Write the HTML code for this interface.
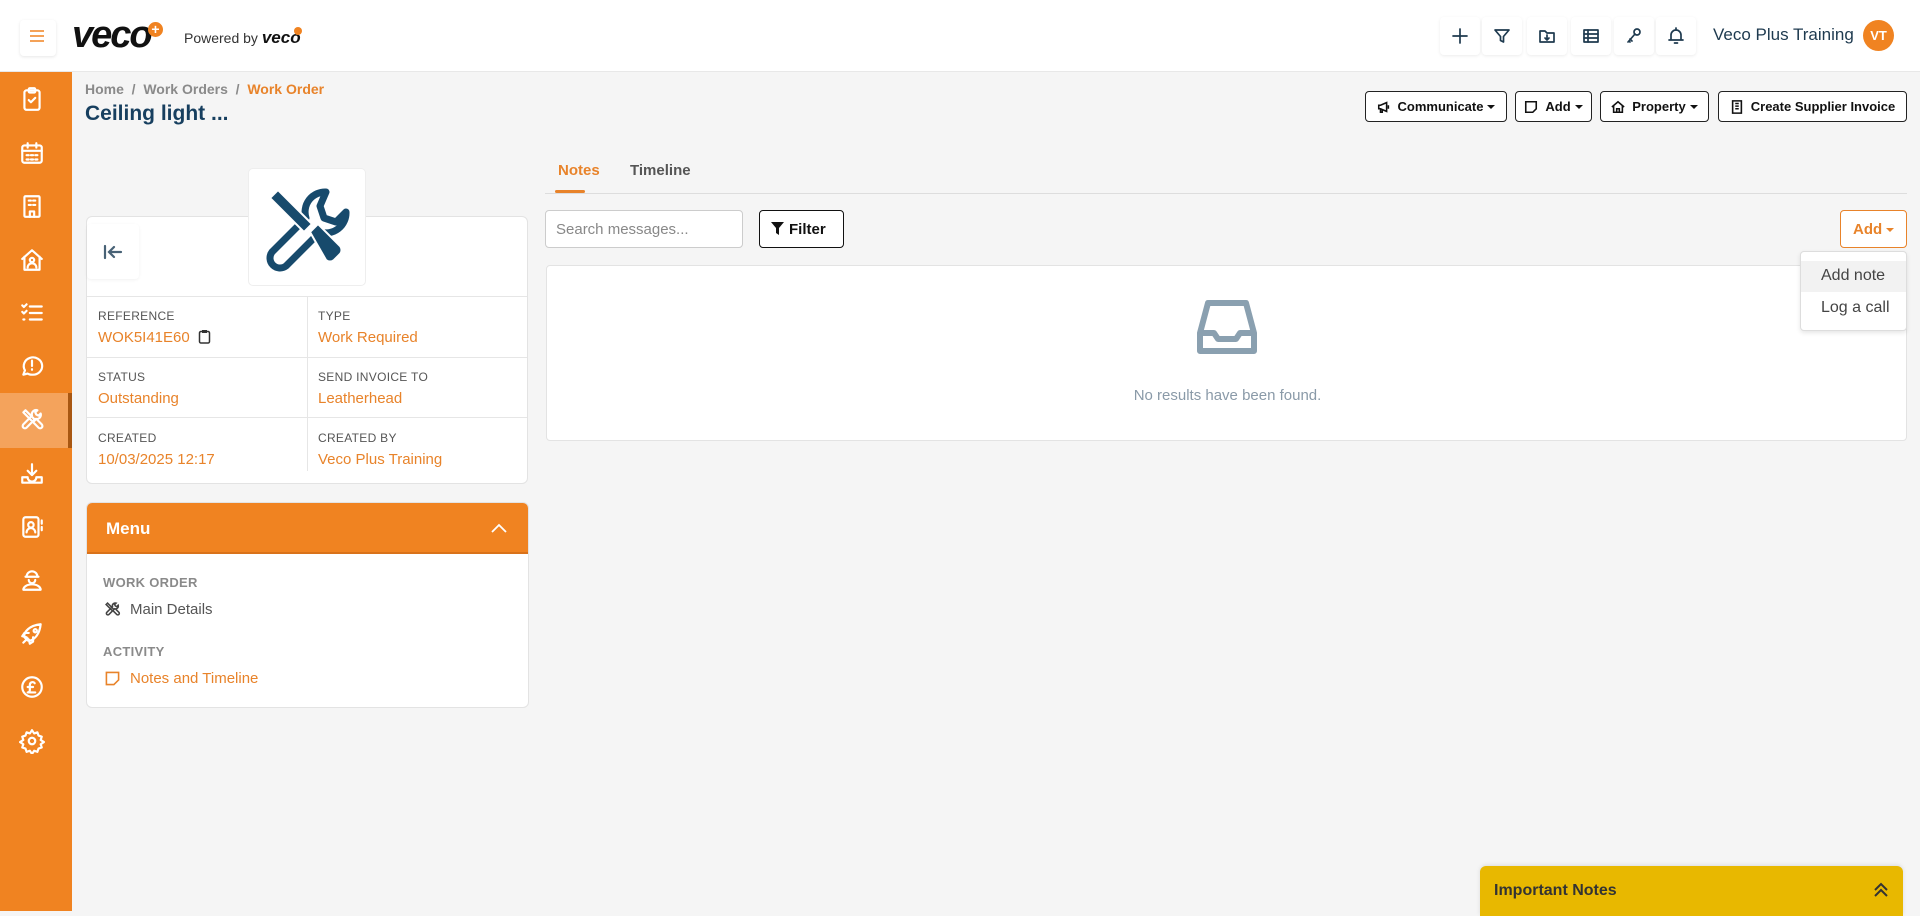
<!DOCTYPE html>
<html><head><meta charset="utf-8"><style>
*{box-sizing:border-box;margin:0;padding:0}
body{width:1920px;height:911px;overflow:hidden;background:#f5f5f5;font-family:"Liberation Sans",sans-serif;position:relative;color:#333}
.abs{position:absolute}
.hdr{left:0;top:0;width:1920px;height:72px;background:#fff;border-bottom:1px solid #e8e8e8}
.side{left:0;top:72px;width:72px;height:839px;background:#f08321}
.side svg{position:absolute;left:19px;width:26px;height:26px;fill:none;stroke:#fff;stroke-width:2;stroke-linecap:round;stroke-linejoin:round}
.hicon{position:absolute;top:17px;width:40px;height:38px;border-radius:4px;box-shadow:0 1px 3px rgba(0,0,0,.08);background:#fff}
.hicon svg{position:absolute;left:10px;top:9px;width:20px;height:20px;fill:none;stroke:#1e3a4f;stroke-width:1.7;stroke-linecap:round;stroke-linejoin:round}
.btn{position:absolute;top:91px;height:31px;border:1.5px solid #222;border-radius:4px;background:#fff;font-weight:bold;font-size:13px;color:#111;display:flex;align-items:center;justify-content:center;white-space:nowrap}
.btn svg{width:14px;height:14px;fill:none;stroke:#111;stroke-width:1.8;margin-right:7px}
.caret{display:inline-block;border-left:4px solid transparent;border-right:4px solid transparent;border-top:4px solid #111;margin-left:4px;vertical-align:middle}
.card{background:#fff;border:1px solid #e3e3e3;border-radius:6px}
.lbl{font-size:12px;color:#555;letter-spacing:.3px}
.val{font-size:15px;color:#e8832a;margin-top:6px}
</style></head><body>
<div class="abs hdr">
  <div class="abs" style="left:20px;top:20px;width:36px;height:36px;border-radius:4px;box-shadow:0 1px 3px rgba(0,0,0,.1)"></div>
  <svg class="abs" style="left:29px;top:28px" width="16" height="16" viewBox="0 0 16 16"><path d="M1 3h14M1 8h14M1 13h14" stroke="#f08321" stroke-width="1.6"/></svg>
  <div class="abs" style="left:72px;top:14px;font-size:38px;font-weight:bold;font-style:italic;color:#111;letter-spacing:-2px">veco</div>
  <div class="abs" style="left:148px;top:22px;width:15px;height:15px;border-radius:50%;background:#f08321;color:#fff;font-size:14px;line-height:15px;text-align:center;font-weight:bold">+</div>
  <div class="abs" style="left:184px;top:28px;font-size:14px;color:#333">Powered by <b style="font-style:italic;font-size:17px;color:#111">veco</b></div>
  <div class="abs" style="left:294px;top:27px;width:8px;height:8px;border-radius:50%;background:#f08321"></div>
  <div class="hicon" style="left:1440px"><svg viewBox="0 0 20 20"><path d="M10 3v14M3 10h14"/></svg></div>
  <div class="hicon" style="left:1482px"><svg viewBox="0 0 20 20"><path d="M3 4h14l-5.5 6.5V16l-3-1.5v-4z"/></svg></div>
  <div class="hicon" style="left:1527px"><svg viewBox="0 0 20 20"><path d="M3 5v11h14V7h-7L8 5z M10 9v5M8 12l2 2 2-2"/></svg></div>
  <div class="hicon" style="left:1571px"><svg viewBox="0 0 20 20"><rect x="3" y="4" width="14" height="12"/><path d="M3 8h14M3 12h14M7 4v12"/></svg></div>
  <div class="hicon" style="left:1614px"><svg viewBox="0 0 20 20"><circle cx="13" cy="6" r="3"/><path d="M11 8l-7 8M6 13l2 2M5 15l1 1"/></svg></div>
  <div class="hicon" style="left:1656px"><svg viewBox="0 0 20 20"><path d="M5 14V9a5 5 0 0110 0v5H5zM3 14h14M8.5 17h3M10 2v2"/></svg></div>
  <div class="abs" style="left:1713px;top:25px;font-size:17px;color:#1e3a4f">Veco Plus Training</div>
  <div class="abs" style="left:1863px;top:20px;width:31px;height:31px;border-radius:50%;background:#f08321;color:#fff;font-size:13px;font-weight:bold;line-height:31px;text-align:center">VT</div>
</div>
<div class="abs side">
  <div class="abs" style="left:0;top:321px;width:68px;height:55px;background:#f4a35c"></div>
  <div class="abs" style="left:68px;top:321px;width:4px;height:55px;background:#a85712"></div>
  <svg style="top:14px" viewBox="0 0 24 24"><rect x="5" y="4" width="14" height="18" rx="2"/><rect x="9" y="2" width="6" height="4" rx="1"/><path d="M9 13l2 2 4-4"/></svg>
  <svg style="top:68px" viewBox="0 0 24 24"><rect x="3" y="5" width="18" height="16" rx="2"/><path d="M3 10h18M8 3v4M16 3v4M7 14h2M11 14h2M15 14h2M7 18h2M11 18h2M15 18h2"/></svg>
  <svg style="top:121px" viewBox="0 0 24 24"><rect x="5" y="3" width="14" height="19" rx="1"/><path d="M9 7h2M13 7h2M9 11h2M13 11h2M10 22v-5h4v5"/></svg>
  <svg style="top:175px" viewBox="0 0 24 24"><path d="M3 11l9-8 9 8M5 9v12h14V9"/><circle cx="12" cy="12" r="2"/><path d="M8 19a4 4 0 018 0"/></svg>
  <svg style="top:228px" viewBox="0 0 24 24"><path d="M3 5l1.5 1.5L7 4M3 11l1.5 1.5L7 10M10 6h11M10 12h11M10 18h11M4 18h1"/></svg>
  <svg style="top:281px" viewBox="0 0 24 24"><path d="M4 20l1.5-4A8.5 8 0 1112 20c-1.5 0-3-.3-4-1z"/><path d="M12 7v5M12 15v.5"/></svg>
  <svg style="top:335px" viewBox="0 0 24 24"><path d="M4 5l2-2 9 9-2 2zM13 14l5 5a2 2 0 003-3l-5-5M20 6a4 4 0 01-5 5L7 19a2 2 0 01-3-3l8-8a4 4 0 015-5l-2 2 1 2 2 1z"/></svg>
  <svg style="top:389px" viewBox="0 0 24 24"><path d="M12 3v10M8 9l4 4 4-4M3 15v5h18v-5h-5a4 4 0 01-8 0z"/></svg>
  <svg style="top:442px" viewBox="0 0 24 24"><rect x="4" y="3" width="14" height="18" rx="2"/><circle cx="11" cy="10" r="2.5"/><path d="M7 17a4 4 0 018 0M21 6v3M21 12v3"/></svg>
  <svg style="top:495px" viewBox="0 0 24 24"><path d="M7 9a5 5 0 0110 0zM6 9h12M9 12a3 3 0 006 0M4 21a8 5 0 0116 0z"/></svg>
  <svg style="top:549px" viewBox="0 0 24 24"><path d="M5 15c-1-5 5-11 15-12-1 10-7 16-12 15zM8 16l-4 4M9 11H5l-2 3 4 1M13 15v4l-3 2-1-4"/><circle cx="15" cy="9" r="1.5"/></svg>
  <svg style="top:602px" viewBox="0 0 24 24"><circle cx="12" cy="12" r="9"/><path d="M14.5 8.5a2.5 2.5 0 00-4.5 1.5v5c0 1-1 2-2 2h7M8 12h5"/></svg>
  <svg style="top:656px" viewBox="0 0 24 24"><circle cx="12" cy="12" r="3"/><path d="M12 2l2 3 3-1 1 3 3 1-1 3 3 2-3 2 1 3-3 1-1 3-3-1-2 3-2-3-3 1-1-3-3-1 1-3-3-2 3-2-1-3 3-1 1-3 3 1z"/></svg>
</div>

<div class="abs" style="left:85px;top:81px;font-size:14px;font-weight:bold;color:#8a8a8a">Home &nbsp;/&nbsp; Work Orders &nbsp;/&nbsp; <span style="color:#e8832a">Work Order</span></div>
<div class="abs" style="left:85px;top:102px;font-size:21px;font-weight:bold;color:#173f5f">Ceiling light ...</div>

<div class="btn" style="left:1365px;width:142px"><svg viewBox="0 0 16 16"><path d="M2 6v4h2l7 3V3L4 6zM4 10v4h2v-3.5M13 6v4"/></svg>Communicate<span class="caret"></span></div>
<div class="btn" style="left:1515px;width:77px"><svg viewBox="0 0 16 16"><path d="M2 2h12v8l-4 4H2z"/></svg>Add<span class="caret"></span></div>
<div class="btn" style="left:1600px;width:109px"><svg viewBox="0 0 16 16"><path d="M1 8l7-6 7 6M3 6v8h10V6M6.5 14v-4h3v4"/></svg>Property<span class="caret"></span></div>
<div class="btn" style="left:1718px;width:189px"><svg viewBox="0 0 16 16"><path d="M3 1h10v14H3zM6 4h4M6 7h4M6 10h4"/></svg>Create Supplier Invoice</div>

<div class="abs card" style="left:86px;top:216px;width:442px;height:268px">
  <div class="abs" style="left:0;top:7px;width:52px;height:55px;border-radius:4px;box-shadow:0 1px 3px rgba(0,0,0,.06)"></div>
  <svg class="abs" style="left:15px;top:26px" width="22" height="18" viewBox="0 0 22 18"><path d="M3 3v12M19 9H8M12 4L7 9l5 5" fill="none" stroke="#486276" stroke-width="2.2" stroke-linecap="round"/></svg>
  <div class="abs" style="left:0;top:79px;width:440px;border-top:1px solid #e6e6e6"></div>
  <div class="abs" style="left:0;top:140px;width:440px;border-top:1px solid #e6e6e6"></div>
  <div class="abs" style="left:0;top:200px;width:440px;border-top:1px solid #e6e6e6"></div>
  <div class="abs" style="left:220px;top:79px;height:175px;border-left:1px solid #e6e6e6"></div>
  <div class="abs" style="left:11px;top:92px"><div class="lbl">REFERENCE</div><div class="val">WOK5I41E60 <svg width="13" height="15" viewBox="0 0 13 15" style="vertical-align:-2px;margin-left:4px"><rect x="1.5" y="2.5" width="10" height="11.5" rx="1.5" fill="none" stroke="#333" stroke-width="1.5"/><rect x="4" y="1" width="5" height="3" fill="#333"/></svg></div></div>
  <div class="abs" style="left:231px;top:92px"><div class="lbl">TYPE</div><div class="val">Work Required</div></div>
  <div class="abs" style="left:11px;top:153px"><div class="lbl">STATUS</div><div class="val">Outstanding</div></div>
  <div class="abs" style="left:231px;top:153px"><div class="lbl">SEND INVOICE TO</div><div class="val">Leatherhead</div></div>
  <div class="abs" style="left:11px;top:214px"><div class="lbl">CREATED</div><div class="val">10/03/2025 12:17</div></div>
  <div class="abs" style="left:231px;top:214px"><div class="lbl">CREATED BY</div><div class="val">Veco Plus Training</div></div>
</div>
<div class="abs" style="left:248px;top:168px;width:118px;height:118px;background:#fff;border:1px solid #eee;border-radius:5px">
  <svg class="abs" style="left:15px;top:15px" width="88" height="88" viewBox="0 0 88 88">
    <path d="M62 8a20 20 0 00-20 26L8 68a10 10 0 0014 14l34-34a20 20 0 0026-20l-10 10-12-4-4-12z" fill="none" stroke="#174a6c" stroke-width="7" stroke-linejoin="round"/>
    <path d="M6 14l8-8 34 34-8 8z" fill="#174a6c" stroke="#fff" stroke-width="2"/>
    <path d="M46 48l8-8 22 22a6 6 0 010 8l-6 6a6 6 0 01-8 0z" fill="#174a6c" stroke="#fff" stroke-width="2"/>
  </svg>
</div>

<div class="abs card" style="left:86px;top:502px;width:443px;height:206px;overflow:hidden">
  <div class="abs" style="left:0;top:0;width:443px;height:51px;background:#f08321;border-bottom:2px solid #d9721a"></div>
  <div class="abs" style="left:19px;top:16px;font-size:17px;font-weight:bold;color:#fff">Menu</div>
  <svg class="abs" style="left:403px;top:19px" width="18" height="12" viewBox="0 0 18 12"><path d="M2 10l7-7 7 7" fill="none" stroke="#fff" stroke-width="1.8"/></svg>
  <div class="abs" style="left:16px;top:72px;font-size:13px;font-weight:bold;color:#8a8a8a;letter-spacing:.3px">WORK ORDER</div>
  <svg class="abs" style="left:17px;top:98px" width="17" height="17" viewBox="0 0 24 24"><path d="M3 5l2-2 9 9-2 2zM13 14l5 5a2 2 0 003-3l-5-5M20 6a4 4 0 01-5 5L7 19a2 2 0 01-3-3l8-8a4 4 0 015-5l-2 2 1 2 2 1z" fill="none" stroke="#444" stroke-width="2.2"/></svg>
  <div class="abs" style="left:43px;top:98px;font-size:15px;color:#555">Main Details</div>
  <div class="abs" style="left:16px;top:141px;font-size:13px;font-weight:bold;color:#8a8a8a;letter-spacing:.3px">ACTIVITY</div>
  <svg class="abs" style="left:18px;top:168px" width="15" height="15" viewBox="0 0 16 16"><path d="M1.5 1.5h13v8l-5 5h-8z" fill="none" stroke="#e8832a" stroke-width="1.7"/></svg>
  <div class="abs" style="left:43px;top:167px;font-size:15px;color:#e8832a">Notes and Timeline</div>
</div>

<div class="abs" style="left:558px;top:162px;font-size:15px;font-weight:bold;color:#e8832a">Notes</div>
<div class="abs" style="left:630px;top:162px;font-size:15px;font-weight:bold;color:#555">Timeline</div>
<div class="abs" style="left:545px;top:193px;width:1362px;border-top:1px solid #ddd"></div>
<div class="abs" style="left:555px;top:190px;width:30px;height:3px;background:#e8832a;border-radius:2px"></div>

<div class="abs" style="left:545px;top:210px;width:198px;height:38px;background:#fff;border:1px solid #ccc;border-radius:4px;font-size:15px;color:#888;padding:10px 0 0 10px">Search messages...</div>
<div class="abs" style="left:759px;top:210px;width:85px;height:38px;background:#fff;border:1.5px solid #111;border-radius:4px;font-size:15px;font-weight:bold;color:#111;padding:10px 0 0 11px"><svg width="13" height="13" viewBox="0 0 13 13" style="vertical-align:-1px;margin-right:5px"><path d="M0 0h13L8 6v7L5 11V6z" fill="#111"/></svg>Filter</div>
<div class="abs" style="left:1840px;top:210px;width:67px;height:38px;background:#fff;border:1px solid #e8832a;border-radius:4px;font-size:15px;font-weight:bold;color:#e8832a;padding:10px 0 0 12px">Add<span class="caret" style="border-top-color:#e8832a"></span></div>

<div class="abs card" style="left:546px;top:265px;width:1361px;height:176px;border-radius:4px">
  <svg class="abs" style="left:647px;top:33px" width="66" height="58" viewBox="0 0 66 58"><path d="M14 4h38l8 30v18H6V34z M6 34h14l4 6h18l4-6h14" fill="none" stroke="#8aa0b0" stroke-width="6" stroke-linejoin="round"/></svg>
  <div class="abs" style="left:0;width:1361px;top:121px;text-align:center;font-size:15px;color:#8a9aa8">No results have been found.</div>
</div>

<div class="abs" style="left:1800px;top:251px;width:107px;height:80px;background:#fff;border:1px solid #ddd;border-radius:4px;box-shadow:0 2px 5px rgba(0,0,0,.1)">
  <div class="abs" style="left:0;top:9px;width:105px;height:31px;background:#f2f2f2"></div>
  <div class="abs" style="left:20px;top:15px;font-size:16px;color:#444">Add note</div>
  <div class="abs" style="left:20px;top:47px;font-size:16px;color:#444">Log a call</div>
</div>

<div class="abs" style="left:1480px;top:866px;width:423px;height:50px;background:#e8b800;border-radius:6px 6px 0 0;box-shadow:0 -1px 4px rgba(0,0,0,.1)">
  <div class="abs" style="left:14px;top:16px;font-size:16px;font-weight:bold;color:#333">Important Notes</div>
  <svg class="abs" style="left:392px;top:15px" width="18" height="18" viewBox="0 0 18 18"><path d="M3 9l6-6 6 6M3 15l6-6 6 6" fill="none" stroke="#333" stroke-width="2"/></svg>
</div>
</body></html>
